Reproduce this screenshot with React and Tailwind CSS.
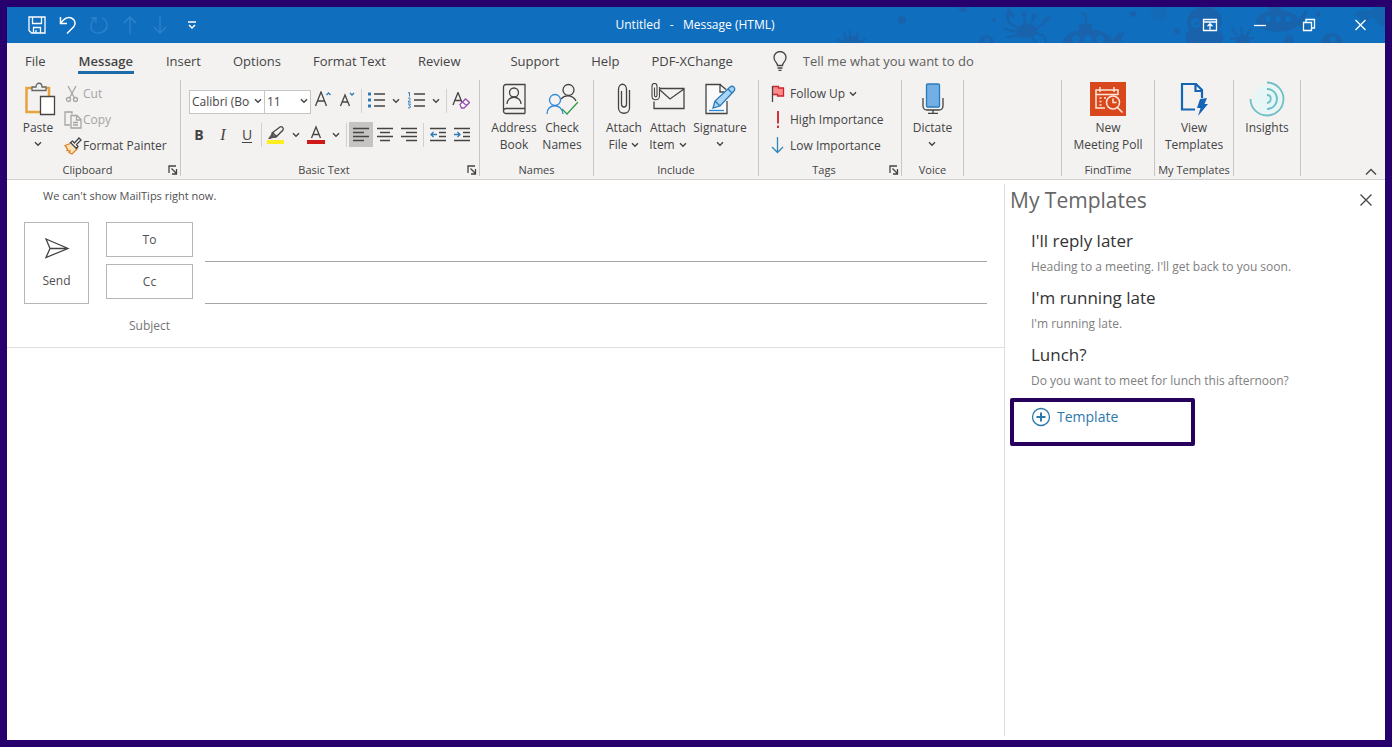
import clsx from 'clsx';

const tabs = [
  {text: 'File'},
  {text: 'Message', active: true},
  {text: 'Insert'},
  {text: 'Options'},
  {text: 'Format Text'},
  {text: 'Review'},
  {text: 'Support', gap: true},
  {text: 'Help'},
  {text: 'PDF-XChange'},
]

const templates = [
  {title: "I'll reply later", text: "Heading to a meeting. I'll get back to you soon."},
  {title: "I'm running late", text: "I'm running late."},
  {title: 'Lunch?', text: 'Do you want to meet for lunch this afternoon?'},
]

function Icon({ w, h, children, className }) {
  return (
    <svg
      className={clsx('shrink-0', className)}
      width={w}
      height={h}
      viewBox={`0 0 ${w} ${h}`}
      fill="none"
      stroke="#444"
      strokeWidth={1.3}
      aria-hidden="true"
    >
      {children}
    </svg>
  );
}

function Chevron({ className }) {
  return (
    <Icon w={8} h={6} className={className}>
      <path d="M1 1.200l3 3 3-3" strokeWidth={1.4} />
    </Icon>
  );
}

function Group({ label, launcher, className, children }) {
  return (
    <section className={clsx('flex h-24 shrink-0 flex-col border-r border-[#c8c6c4]', className)}>
      <div className="flex flex-1">{children}</div>
      <div className="flex h-3 items-center">
        <span className="flex-1 text-center text-[11px] leading-3 whitespace-nowrap">{label}</span>
        {launcher && (
          <button type="button" className="mr-0.5" aria-label={`${label} settings`}>
            <Icon w={10} h={10}>
              <path d="M1 8V1h7M3.500 3.500L8 8M8.500 4v5H4" />
            </Icon>
          </button>
        )}
      </div>
    </section>
  );
}

function BigButton({ icon, lines, arrow, className }) {
  return (
    <button type="button" className={clsx('flex flex-col items-center', className)}>
      <span className="flex h-[38px] items-center justify-center">{icon}</span>
      <span className="mt-px text-[12px] leading-[17px] whitespace-nowrap">
        {lines.map((line, index) => (
          <span key={index} className="flex items-center justify-center gap-1">
            {line}
            {arrow === 'inline' && index === lines.length - 1 && <Chevron />}
          </span>
        ))}
        {arrow === 'below' && (
          <span className="flex h-4 items-center justify-center"><Chevron /></span>
        )}
      </span>
    </button>
  );
}

function RowButton({ icon, text, disabled, arrow }) {
  return (
    <button
      type="button"
      disabled={disabled}
      className={clsx('flex h-[26px] items-center text-[12px] whitespace-nowrap', disabled && 'text-[#a6a4a2]')}
    >
      <span className="flex w-[19px] justify-start">{icon}</span>
      {text}
      {arrow && <Chevron className="ml-1" />}
    </button>
  );
}

function ToolButton({ label, active, children }) {
  return (
    <button
      type="button"
      aria-label={label}
      className={clsx('flex h-[25px] w-6 items-center justify-center', active && 'bg-[#c6c4c2]')}
    >
      {children}
    </button>
  );
}

function MenuArrow({ label }) {
  return (
    <button type="button" aria-label={label} className="flex h-6 w-4 items-center justify-center">
      <Chevron />
    </button>
  );
}

function Separator() {
  return <span className="mx-0.5 h-6 w-px bg-[#d2d0ce]" />;
}

function Doodles() {
  return (
    <svg className="absolute top-0 right-0" width="560" height="36" viewBox="0 0 560 36" fill="#1863ab" aria-hidden="true">
      <circle cx="77" cy="13" r="4" />
      <circle cx="138" cy="1" r="4" />
      <circle cx="169" cy="13" r="2" />
      <circle cx="308" cy="7" r="3" />
      <circle cx="352" cy="24" r="3" />
      <circle cx="334" cy="6" r="8" opacity=".4" />
      <circle cx="493" cy="7" r="2.500" />
      <circle cx="464" cy="33" r="4.500" />
      {/* starfish */}
      <g stroke="#1863ab" strokeWidth="2" strokeLinecap="round">
        <path d="M21 35l-2-9M25 35V24M30 35l3-9M34 36l6-4M18 36l-5-4" />
        <path d="M407 22l5 6M416 20l1 9M426 22l-5 7M406 32l7-1M428 31h-7" />
        <path d="M278 36l-3-7M285 36v-6M294 36l4-11" />
      </g>
      <path d="M19 36c0-9 16-9 17 0zM411 36c0-11 14-11 14 0z" />
      {/* crab */}
      <g transform="translate(12 1)">
        <path d="M180 25c0-11 16-13 20-3 3 8-19 11-20 3z" />
        <circle cx="187" cy="6" r="2.500" />
        <circle cx="197" cy="8" r="2.500" />
        <g stroke="#1863ab" strokeWidth="2" fill="none" strokeLinecap="round">
          <path d="M188 16l-1-8M194 16l2-6M181 20l-9-5-2-8M181 24l-13-3M182 27l-12 2M198 22l8-6 5-6M199 25l8 3 2 6M194 28l5 7" />
          <path d="M171 10l1-7 4 5M207 13l5-3" strokeWidth="3" />
        </g>
      </g>
      {/* submarine coming up */}
      <g transform="translate(18 0)">
        <path d="M220 36c2-18 46-18 49-2l7-9 3 2-5 9zM236 23v-6h13v6z" />
        <path d="M243 17V9q0-3-5-3" stroke="#1863ab" strokeWidth="2" fill="none" />
        <g fill="#106ebe"><circle cx="233" cy="32" r="4" /><circle cx="245" cy="32" r="4" /><circle cx="257" cy="32" r="4" /></g>
      </g>
      {/* octopus */}
      <g transform="translate(35 0)">
        <path d="M328 36c-4-6-3-9 2-13-7-9-1-23 15-23s21 14 14 23c5 4 6 8 2 13z" />
        <circle cx="336" cy="16" r="5" fill="#106ebe" />
        <circle cx="337" cy="16" r="2" />
        <circle cx="353" cy="16" r="4" fill="#106ebe" />
      </g>
      {/* submarine */}
      <g transform="translate(38 0)">
        <path d="M393 14c3-14 38-14 42-2l8-9 2 2-5 9 5 9-3 1-7-6c-6 10-39 9-42-4zM404 3l2-3h11l2 3z" />
        <g fill="#106ebe"><circle cx="405" cy="12" r="3" /><circle cx="415" cy="12" r="3" /><circle cx="425" cy="12" r="3" /></g>
      </g>
      <path d="M496 36c0-13 21-13 22 0zM154 36c0-10 14-10 16 0z" />
      <path d="M528 8l8-5 8 1 6-4h10v20l-7-3-4-7-7 3-3 6-4-8z" opacity=".7" />
      <g fill="#106ebe"><circle cx="508" cy="32" r="3" /><circle cx="162" cy="33" r="2.500" /></g>
    </svg>
  );
}

function TitleBar() {
  return (
    <header className="relative flex h-9 items-center bg-[#106ebe] text-white">
      <div className="absolute inset-0 overflow-hidden"><Doodles /></div>
      <div className="relative flex flex-1 items-center gap-3 pl-5">
        <button type="button" aria-label="Save">
          <Icon w={20} h={20}>
            <g stroke="#fff"><path d="M2 2h16v16H4.500L2 15.500zM5.500 2v6.500h9V2M6.500 18v-5.500h7V18M9 15v3" /></g>
          </Icon>
        </button>
        <button type="button" aria-label="Undo">
          <Icon w={18} h={20}>
            <path d="M1.500 2v6.500H8M1.700 8.300C5 3.500 9 1.500 12.500 3c4 2 4.500 6 2 9L8 18.500" stroke="#fff" strokeWidth={1.5} />
          </Icon>
        </button>
        <button type="button" aria-label="Redo" disabled>
          <Icon w={20} h={20}>
            <path d="M2 3h5v5M6.500 3.500C0 8 1 15.500 6 17.500c5 2 11-1 12-6 .6-4-1.500-7-5-8.500" stroke="#2f82cc" />
          </Icon>
        </button>
        <button type="button" aria-label="Previous item" disabled>
          <Icon w={18} h={20}><path d="M9 19V2M3 8l6-6 6 6" stroke="#2f82cc" /></Icon>
        </button>
        <button type="button" aria-label="Next item" disabled>
          <Icon w={18} h={20}><path d="M9 1v17M3 12l6 6 6-6" stroke="#2f82cc" /></Icon>
        </button>
        <button type="button" className="ml-1.5" aria-label="Customize toolbar">
          <Icon w={10} h={10}><path d="M1 2h8M2 5l3 3 3-3" stroke="#fff" strokeWidth={1.5} /></Icon>
        </button>
      </div>
      <h1 className="relative pr-1.5 text-[12px] whitespace-pre">Untitled   -   Message (HTML)</h1>
      <div className="relative flex flex-1 items-center justify-end gap-9 pr-4">
        <button type="button" aria-label="Ribbon display options">
          <Icon w={16} h={14}>
            <path d="M1.500 1.500h13v11h-13zM1.500 4h13M8 11.500V6M5.500 8.200L8 5.700l2.500 2.500" stroke="#fff" />
          </Icon>
        </button>
        <button type="button" aria-label="Minimize">
          <Icon w={12} h={12}><path d="M0 6.500h12" stroke="#fff" /></Icon>
        </button>
        <button type="button" aria-label="Restore">
          <Icon w={14} h={14}><path d="M1.500 4.500h8v8h-8zM4 4V1.500h8.500V10H10" stroke="#fff" /></Icon>
        </button>
        <button type="button" aria-label="Close">
          <Icon w={17} h={14}><path d="M3.500 2l10 10M13.500 2l-10 10" stroke="#fff" /></Icon>
        </button>
      </div>
    </header>
  );
}

function Tabs() {
  return (
    <nav className="flex h-[34px] items-start gap-8 pt-2 pl-[18px] text-[13px] leading-5 whitespace-nowrap">
      {tabs.map((tab, index) => (
        <a
          key={index}
          href="#"
          className={clsx(tab.active && 'border-b-[3px] border-[#1b6ca8] px-px font-semibold', tab.gap && 'ml-[18px]')}
        >
          {tab.text}
        </a>
      ))}
      <label className="ml-2 flex items-center gap-4">
        <Icon w={14} h={20}>
          <path d="M4.500 14.500c0-3-3.500-4-3.500-8a6 6 0 0112 0c0 4-3.500 5-3.500 8zM4.500 17h5M5.500 19.300h3" />
        </Icon>
        <input
          type="text"
          placeholder="Tell me what you want to do"
          className="h-5 w-52 bg-transparent outline-none placeholder:text-[#605e5c]"
        />
      </label>
    </nav>
  );
}

function ClipboardGroup() {
  return (
    <Group label="Clipboard" launcher className="w-[174px]">
      <BigButton
        className="ml-[9px] w-11"
        lines={['Paste']}
        arrow="below"
        icon={
          <Icon w={32} h={34} className="ml-1">
            <path d="M8 6H2.500v24H16M21 6h4v8" stroke="#e8a33d" strokeWidth={2.5} />
            <path d="M8 8.500V5h4c0-5 6-5 6 0h4v3.500z" fill="#f3f2f1" stroke="#666" />
            <path d="M16.500 14.500h14v18h-14z" fill="#fff" />
          </Icon>
        }
      />
      <div className="ml-1 flex flex-col pt-px">
        <RowButton
          text="Cut"
          disabled
          icon={
            <Icon w={16} h={18}>
              <g stroke="#a6a4a2">
                <path d="M4 1l6.500 12M12 1L5.500 13" />
                <circle cx="4.500" cy="14.500" r="2" /><circle cx="11.500" cy="14.500" r="2" />
              </g>
            </Icon>
          }
        />
        <RowButton
          text="Copy"
          disabled
          icon={
            <Icon w={18} h={18}>
              <path d="M6 14H1V1h7v2M7 4.500h6l4 4V17H7zM12.500 4.500V9H17M9 11.500h5M9 14h5" stroke="#a6a4a2" />
            </Icon>
          }
        />
        <RowButton
          text="Format Painter"
          icon={
            <Icon w={18} h={18}>
              <path d="M1 8.500l7-2.500 5 6-5 5-3-1.500 1-1.500-3-.5.500-1.500z" fill="#fbe3b8" stroke="#d9822b" />
              <path d="M6.500 5.500l2-1.500 2 2L15 1l2 2-4.500 4.500 1.500 2-1.500 2z" fill="#fff" />
            </Icon>
          }
        />
      </div>
    </Group>
  );
}

function BasicTextGroup() {
  return (
    <Group label="Basic Text" launcher className="w-[299px]">
      <div className="flex flex-col gap-2 pt-2 pl-2">
        <div className="flex items-center">
          <div className="relative w-[76px]">
            <select aria-label="Font" className="h-6 w-full appearance-none border border-[#c8c6c4] bg-white pr-[14px] pl-0.5 text-[12px]">
              <option>Calibri (Body)</option>
            </select>
            <Chevron className="pointer-events-none absolute top-[10px] right-[3px]" />
          </div>
          <div className="relative -ml-px w-[47px]">
            <select aria-label="Font size" className="h-6 w-full appearance-none border border-[#c8c6c4] bg-white pl-0.5 text-[12px]">
              <option>11</option>
            </select>
            <Chevron className="pointer-events-none absolute top-[10px] right-[3px]" />
          </div>
          <ToolButton label="Increase font size">
            <Icon w={18} h={20}>
              <path d="M1.500 15L7 1l5.500 14M3.500 10h7" />
              <path d="M12.500 4l2-2 2 2" stroke="#2b7bb9" />
            </Icon>
          </ToolButton>
          <ToolButton label="Decrease font size">
            <Icon w={18} h={20}>
              <path d="M2.500 15L7 4l4.500 11M4 11h6" />
              <path d="M12 2l2 2 2-2" stroke="#2b7bb9" />
            </Icon>
          </ToolButton>
          <Separator />
          <ToolButton label="Bullets">
            <Icon w={18} h={18}>
              <path d="M7 2h11M7 8h11M7 14h11" />
              <path d="M1 2h3M1 8h3M1 14h3" stroke="#2b7bb9" strokeWidth={3} />
            </Icon>
          </ToolButton>
          <MenuArrow label="Bullet styles" />
          <ToolButton label="Numbering">
            <Icon w={18} h={18}>
              <path d="M7 2h11M7 8h11M7 14h11" />
              <path d="M1 1l1.500-.5v4M1 6.500c1-1 3-.5 2 1L1 10h3M1 12h2.500L2 13.800c2.500 0 2 2.700-1 2" stroke="#2b7bb9" strokeWidth={1} />
            </Icon>
          </ToolButton>
          <MenuArrow label="Numbering styles" />
          <Separator />
          <ToolButton label="Clear formatting">
            <Icon w={18} h={18}>
              <path d="M1 13L6 .5l4 10M3 8.500h5.500" />
              <path d="M8 12.500L13.500 7l4 3.500-5.500 5.500H9.500zM10.500 10l4 3.500" stroke="#9b4fb5" fill="#fff" />
            </Icon>
          </ToolButton>
        </div>
        <div className="-ml-0.5 flex items-center text-[14px]">
          <ToolButton label="Bold"><b>B</b></ToolButton>
          <ToolButton label="Italic"><i className="font-['Liberation_Serif'] text-[16px]">I</i></ToolButton>
          <ToolButton label="Underline"><u className="underline-offset-2">U</u></ToolButton>
          <Separator />
          <ToolButton label="Highlight color">
            <Icon w={18} h={20}>
              <path d="M0 17h17" stroke="#ffee1f" strokeWidth={4} />
              <path d="M5 8l8-6c2-1 4 1 3 3l-7 7-3 0zM6 8l4 4" />
              <path d="M5 8l4 4-6 2H1z" fill="#555" stroke="none" />
            </Icon>
          </ToolButton>
          <MenuArrow label="More highlight colors" />
          <ToolButton label="Font color">
            <Icon w={18} h={20}>
              <path d="M0 17h18" stroke="#d01818" strokeWidth={4} />
              <path d="M4.500 13L9 2l4.500 11M6 9.500h6" />
            </Icon>
          </ToolButton>
          <MenuArrow label="More font colors" />
          <Separator />
          <ToolButton label="Align left" active>
            <Icon w={16} h={16}><path d="M0 1.500h16M0 5.500h11M0 9.500h16M0 13.500h11" /></Icon>
          </ToolButton>
          <ToolButton label="Align center">
            <Icon w={16} h={16}><path d="M0 1.500h16M3 5.500h10M0 9.500h16M3 13.500h10" /></Icon>
          </ToolButton>
          <ToolButton label="Align right">
            <Icon w={16} h={16}><path d="M0 1.500h16M5 5.500h11M0 9.500h16M5 13.500h11" /></Icon>
          </ToolButton>
          <Separator />
          <ToolButton label="Decrease indent">
            <Icon w={16} h={16}>
              <path d="M0 1.500h16M9 5.500h7M9 9.500h7M0 13.500h16" />
              <path d="M7 7.500H1M3.500 5L1 7.500 3.500 10" stroke="#2b7bb9" />
            </Icon>
          </ToolButton>
          <ToolButton label="Increase indent">
            <Icon w={16} h={16}>
              <path d="M0 1.500h16M9 5.500h7M9 9.500h7M0 13.500h16" />
              <path d="M0 7.500h6M3.500 5L6 7.500 3.500 10" stroke="#2b7bb9" />
            </Icon>
          </ToolButton>
        </div>
      </div>
    </Group>
  );
}

function NamesGroup() {
  return (
    <Group label="Names" className="w-[114px]">
      <BigButton
        className="ml-[10px] w-12"
        lines={['Address', 'Book']}
        icon={
          <Icon w={24} h={32}>
            <path d="M23 30.500H4A2.500 2.500 0 011.500 28V4A2.500 2.500 0 014 1.500h19v29M1.500 28A2.500 2.500 0 014 25.500h19" />
            <circle cx="12" cy="9.500" r="4.500" />
            <path d="M5 21c0-9 14-9 14 0" />
          </Icon>
        }
      />
      <BigButton
        className="w-12"
        lines={['Check', 'Names']}
        icon={
          <Icon w={32} h={34}>
            <circle cx="22.500" cy="8" r="5.500" />
            <path d="M15 17c4-5 12-4 15 2" />
            <g stroke="#2b88d8"><circle cx="9" cy="18" r="5.500" /><path d="M1 32c0-11 15-11 16 0" /></g>
            <path d="M16 27l5 5 11-12" stroke="#2f9e44" />
          </Icon>
        }
      />
    </Group>
  );
}

function IncludeGroup() {
  return (
    <Group label="Include" className="w-[165px]">
      <BigButton
        className="ml-2 w-11"
        lines={['Attach', 'File']}
        arrow="inline"
        icon={
          <Icon w={14} h={32}>
            <path d="M4.500 8v13c0 4 5 4 5 0V6.500c0-7-8-7-8 0V25c0 7 11 7 11 0V7" />
          </Icon>
        }
      />
      <BigButton
        className="w-11"
        lines={['Attach', 'Item']}
        arrow="inline"
        icon={
          <Icon w={34} h={32}>
            <path d="M9 5.500h24v20H3v-7M9 7l10 9L33 6" />
            <path d="M3.500 4.500V12c0 2.500 2.500 2.500 2.500 0V3.500c0-4-5-4-5 0V13c0 5 7.500 5 7.500 0V4" strokeWidth={1.1} />
          </Icon>
        }
      />
      <BigButton
        className="w-[60px]"
        lines={['Signature']}
        arrow="below"
        icon={
          <Icon w={32} h={32}>
            <path d="M17 1.500H2v29h21V18M16 1.500V9h4M16 1.500l6 5" fill="#fafafa" />
            <path d="M5 27.500h15" stroke="#2b88d8" />
            <path d="M9 25l2-7L26 4c3-2 6 1 4 4L16 23zM11 18l5 5M24 6l4 4" stroke="#2b7bb9" fill="#a8d5f5" />
          </Icon>
        }
      />
    </Group>
  );
}

function TagsGroup() {
  return (
    <Group label="Tags" launcher className="w-[143px]">
      <div className="flex flex-col pt-px pl-3">
        <RowButton
          text="Follow Up"
          arrow
          icon={
            <Icon w={14} h={18}>
              <path d="M1.500 1.500h6v1.500h5v8h-6V9.500h-5" fill="#ff8a8a" stroke="#c9252d" />
              <path d="M1.500 1v16" />
            </Icon>
          }
        />
        <RowButton
          text="High Importance"
          icon={
            <Icon w={14} h={18}>
              <path d="M7 0v12.500M7 14.500v2.500" stroke="#d13438" strokeWidth={2} />
            </Icon>
          }
        />
        <RowButton
          text="Low Importance"
          icon={
            <Icon w={14} h={18}>
              <path d="M6.500 0v15.500M1 10l5.500 5.500L12 10" stroke="#2b88b8" />
            </Icon>
          }
        />
      </div>
    </Group>
  );
}

function AddInGroups() {
  return (
    <>
      <Group label="Voice" className="w-[62px]">
        <BigButton
          className="w-full"
          lines={['Dictate']}
          arrow="below"
          icon={
            <Icon w={24} h={32}>
              <rect x="5.500" y="1" width="13" height="23" rx="1" fill="#71afe5" stroke="#2b7bb9" />
              <path d="M2 15v8c0 2 1.500 4 4 4h12c2.500 0 4-2 4-4v-8M12 27v3M7 30.300h10" />
            </Icon>
          }
        />
      </Group>
      <Group className="w-[98px]" />
      <Group label="FindTime" className="w-[93px]">
        <BigButton
          className="w-full"
          lines={['New', 'Meeting Poll']}
          icon={
            <Icon w={36} h={34}>
              <path d="M0 0h36v34H0z" fill="#d9481c" stroke="none" />
              <g stroke="#fde5d8" strokeWidth={1.5}>
                <path d="M15 26H6V8h22v5M6 12.500h22M10 5v5M24 5v5" />
                <path d="M9.500 16h2M9.500 19.500h2M9.500 23h2M14 16h2" />
                <circle cx="23" cy="20.500" r="6.500" fill="#d9481c" />
                <path d="M27.500 25.500l5 5M23 16.500v4h3.500" />
              </g>
            </Icon>
          }
        />
      </Group>
      <Group label="My Templates" className="w-[79px]">
        <BigButton
          className="w-full"
          lines={['View', 'Templates']}
          icon={
            <Icon w={28} h={34}>
              <path d="M15 27.500H2V2h14l6 6v8M15.500 2v7H22" stroke="#1565b5" strokeWidth={2.2} />
              <path d="M20 17l7-1-2.500 6H28L18 34l2.500-8H17z" fill="#1565b5" stroke="none" />
            </Icon>
          }
        />
      </Group>
      <Group className="w-[67px]">
        <BigButton
          className="w-full"
          lines={['Insights']}
          icon={
            <Icon w={36} h={36}>
              <circle cx="18" cy="18" r="14" fill="#e6f6f6" stroke="none" />
              <g stroke="#6cc0c6" strokeWidth={1.8}>
                <path d="M18 1.500a16.500 16.500 0 11-16.500 16.500" />
                <path d="M18 8a10 10 0 010 20" />
                <path d="M18 14c5 0 5 7 0 8" />
              </g>
            </Icon>
          }
        />
      </Group>
    </>
  );
}

function Compose() {
  return (
    <main className="flex min-w-0 flex-1 flex-col text-[#505050]">
      <p className="pt-2 pl-9 text-[11px] leading-4">We can't show MailTips right now.</p>
      <div className="mt-[18px] flex px-[17px] text-[12px]">
        <button type="button" className="flex w-[65px] flex-col items-center border border-[#b8b6b4] pt-[13px]">
          <Icon w={26} h={24}>
            <path d="M2 3l22 9.500L2 21.500l4-9zM6 12.500h18" />
          </Icon>
          <span className="mt-[11px] leading-5">Send</span>
        </button>
        <div className="ml-[17px] flex flex-1 flex-col gap-0.5">
          {['To', 'Cc'].map((name) => (
            <div key={name} className="flex h-10 items-start gap-3">
              <button type="button" className="h-[35px] w-[87px] border border-[#b8b6b4]">{name}</button>
              <input type="text" aria-label={name} className="h-10 flex-1 border-b border-[#a8a6a4] outline-none" />
            </div>
          ))}
        </div>
      </div>
      <div className="flex h-11 items-center border-b border-[#e1dfdd] px-[17px] pl-[99px] text-[12px]">
        <label htmlFor="subject" className="w-[87px] text-center text-[#767676]">Subject</label>
        <input id="subject" type="text" className="ml-3 h-8 flex-1 outline-none" />
      </div>
      <textarea aria-label="Message body" className="flex-1 resize-none p-4 outline-none" />
    </main>
  );
}

function TemplatesPane() {
  return (
    <aside className="my-1 w-[381px] shrink-0 border-l border-[#e1dfdd]">
      <div className="flex items-start justify-between pr-3 pl-[5px]">
        <h2 className="text-[21px] leading-[33px] text-[#666]">My Templates</h2>
        <button type="button" aria-label="Close pane" className="mt-[9px]">
          <Icon w={14} h={14}><path d="M1.500 1.500l11 11M12.500 1.500l-11 11" /></Icon>
        </button>
      </div>
      <ul className="mt-3 pl-[26px]">
        {templates.map((template, index) => (
          <li key={index} className="h-[57px]">
            <h3 className="text-[17px] leading-6 text-[#333]">{template.title}</h3>
            <p className="pt-0.5 text-[12px] leading-6 text-[#808080]">{template.text}</p>
          </li>
        ))}
      </ul>
      <div className="-mt-0.5 ml-[5px] h-12 w-[185px] rounded-xs border-4 border-[#26005c]">
        <button type="button" className="flex items-center gap-1.5 pt-[3px] pl-[17px] text-[14px] leading-6 text-[#2b78ab]">
          <Icon w={20} h={20}>
            <circle cx="10" cy="10" r="8.500" stroke="#2b78ab" />
            <path d="M10 5.500v9M5.500 10h9" stroke="#2b78ab" strokeWidth={2} />
          </Icon>
          Template
        </button>
      </div>
    </aside>
  );
}

export default function App() {
  return (
    <div className="flex min-h-screen flex-col border-[7px] border-[#28006e] bg-white font-['Open_Sans','Noto_Sans',sans-serif] text-[#444]">
      <TitleBar />
      <div className="border-b border-[#d2d0ce] bg-[#f3f2f1]">
        <Tabs />
        <div className="flex py-[3px]">
          <ClipboardGroup />
          <BasicTextGroup />
          <NamesGroup />
          <IncludeGroup />
          <TagsGroup />
          <AddInGroups />
          <button type="button" className="mr-2 ml-auto self-end" aria-label="Collapse the ribbon">
            <Icon w={12} h={8}><path d="M1 6.500l5-5 5 5" /></Icon>
          </button>
        </div>
      </div>
      <div className="flex flex-1">
        <Compose />
        <TemplatesPane />
      </div>
    </div>
  );
}
